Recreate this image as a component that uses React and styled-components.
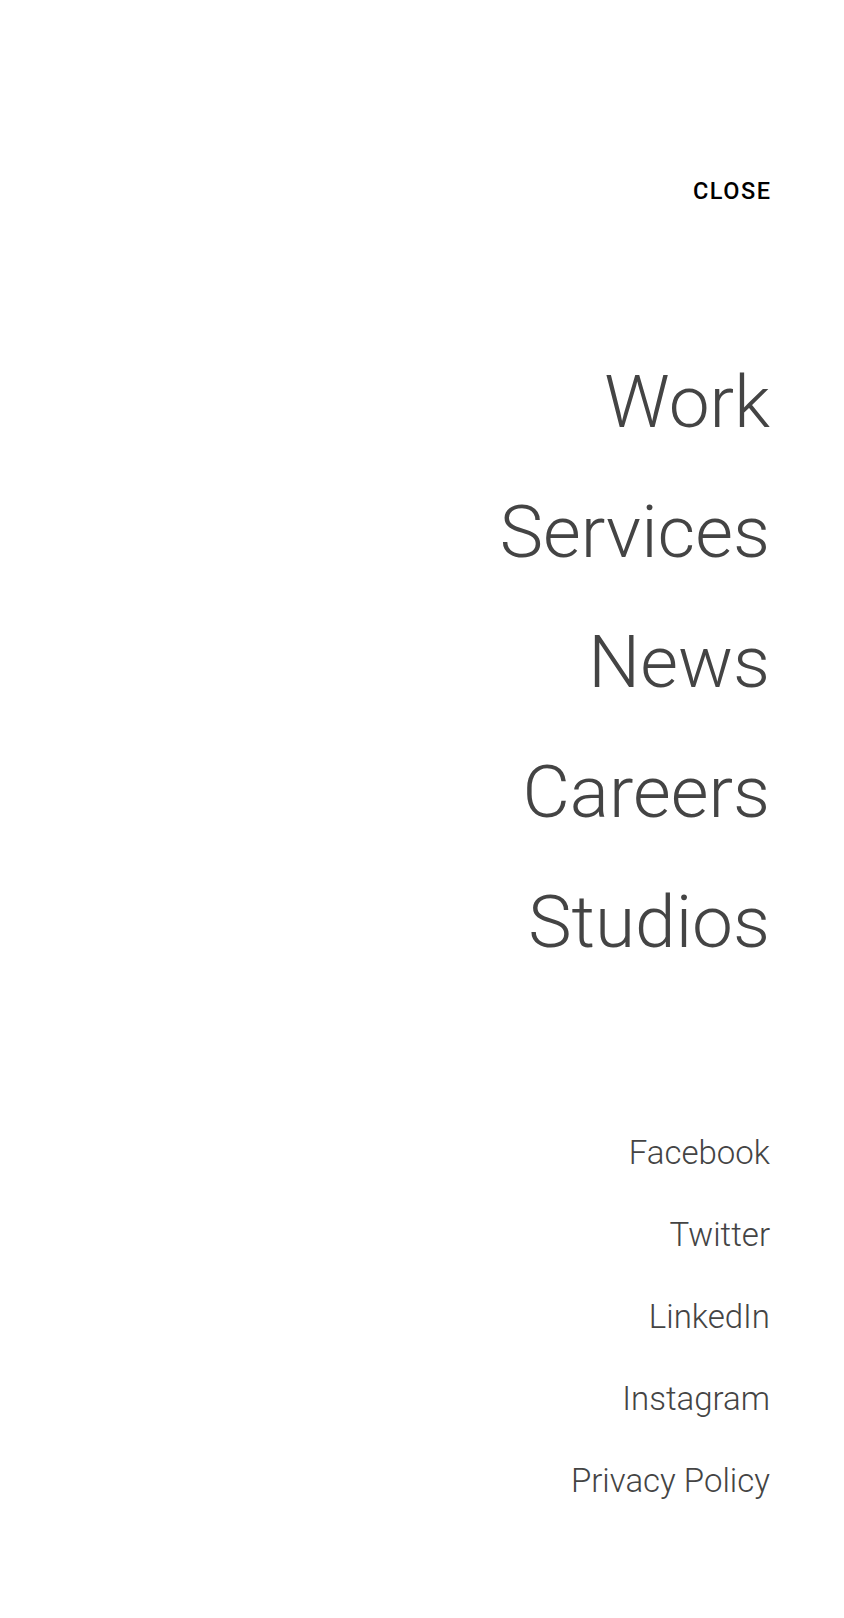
import React from 'react'
import styled, { createGlobalStyle } from 'styled-components'

const GlobalStyle = createGlobalStyle`
  html, body {
    margin: 0;
    padding: 0;
    background: #fff;
  }
  body {
    font-family: Roboto, "Liberation Sans", sans-serif;
    -webkit-font-smoothing: antialiased;
  }
`

const Overlay = styled.div`
  display: flex;
  flex-direction: column;
  align-items: flex-end;

  min-height: 1618px;
  box-sizing: border-box;
  padding: 175px 74px 0 0;
  background: #fff;
`

const CloseButton = styled.button`
  appearance: none;
  background: none;
  border: 0;
  padding: 0;
  margin-right: -1.5px;
  cursor: pointer;

  color: #000;
  font-family: Roboto, "Liberation Sans", sans-serif;
  font-size: 23.5px;
  font-weight: 500;
  letter-spacing: 1.5px;
  line-height: 32px;
`

const MainNav = styled.nav`
  display: flex;
  flex-direction: column;
  align-items: flex-end;
  margin-top: 130px;
`

const MainLink = styled.a`
  color: #444;
  font-size: 73px;
  font-weight: 300;
  line-height: 130px;
  text-decoration: none;
`

const SocialNav = styled.nav`
  display: flex;
  flex-direction: column;
  align-items: flex-end;
  margin-top: 125px;
`

const SocialLink = styled.a`
  color: #444;
  font-size: 33px;
  font-weight: 300;
  line-height: 82px;
  text-decoration: none;
  font-variant-ligatures: none;
`

const mainLinks = ['Work', 'Services', 'News', 'Careers', 'Studios']
const socialLinks = ['Facebook', 'Twitter', 'LinkedIn', 'Instagram', 'Privacy Policy']

export default function App() {
  return (
    <>
      <GlobalStyle />
      <Overlay>
        <CloseButton>CLOSE</CloseButton>
        <MainNav>
          {mainLinks.map(label => (
            <MainLink key={label} href="#">
              {label}
            </MainLink>
          ))}
        </MainNav>
        <SocialNav>
          {socialLinks.map(label => (
            <SocialLink key={label} href="#">
              {label}
            </SocialLink>
          ))}
        </SocialNav>
      </Overlay>
    </>
  )
}
